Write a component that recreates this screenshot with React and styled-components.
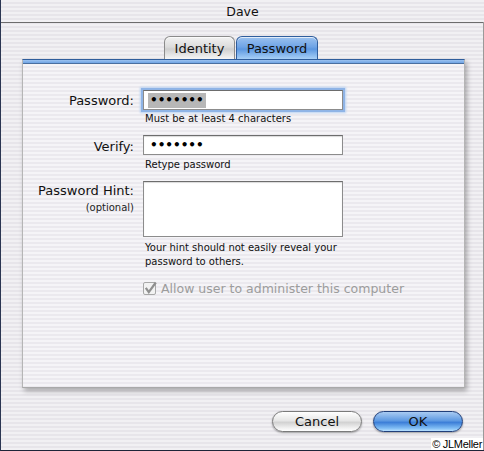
import React from "react";
import styled, { createGlobalStyle } from "styled-components";

const GlobalStyle = createGlobalStyle`
  html, body {
    margin: 0;
    padding: 0;
    background: #fff;
  }
  body {
    font-family: "DejaVu Sans", "Liberation Sans", sans-serif;
  }
`;

const stripes = (a, b) =>
  `repeating-linear-gradient(to bottom, ${a} 0px, ${a} 2px, ${b} 2px, ${b} 4px)`;

const Window = styled.div`
  position: relative;
  width: 483px;
  height: 450px;
  border-left: 1px solid #2b3652;
  border-bottom: 1px solid #1e2538;
  background: ${stripes("#f1f0f3", "#e7e5ea")};
  display: flex;
  flex-direction: column;
  overflow: hidden;
`;

const TitleBar = styled.div`
  height: 21px;
  border-bottom: 1px solid #6c6c6c;
  display: flex;
  align-items: center;
  justify-content: center;
  font-size: 12.5px;
  color: #111;
  padding-top: 1px;
`;

const RightEdge = styled.div`
  position: absolute;
  right: 0;
  top: 22px;
  bottom: 0;
  width: 1px;
  background: #9a9a9a;
`;

const TabRow = styled.div`
  margin-top: 13px;
  height: 23px;
  display: flex;
  padding-left: 163px;
  position: relative;
  z-index: 2;
`;

const Tab = styled.div`
  width: ${(p) => p.$w}px;
  height: 23px;
  box-sizing: border-box;
  display: flex;
  align-items: center;
  justify-content: center;
  font-size: 13px;
  color: #111;
  border-radius: 6px 6px 0 0;
  border: 1px solid ${(p) => (p.$active ? "#2f5d9c" : "#8b8b8b")};
  border-bottom: none;
  margin-right: 1px;
  background: ${(p) =>
    p.$active
      ? "linear-gradient(to bottom, #9cc2ef 0%, #6fa4e6 45%, #5c97e0 55%, #a8d0f7 100%)"
      : "linear-gradient(to bottom, #f2f2f2 0%, #dcdcdc 45%, #cfcfcf 55%, #f6f6f6 100%)"};
  box-shadow: inset 0 1px 0 rgba(255, 255, 255, 0.7);
`;

const Panel = styled.div`
  margin: 0 19px 0 21px;
  height: 329px;
  box-sizing: border-box;
  border-top: 1px solid #2f5d9c;
  border-left: 1px solid #b5b5b5;
  border-right: 1px solid #b5b5b5;
  border-bottom: 1px solid #a9a9a9;
  background: ${stripes("#f5f4f7", "#ebe9ee")};
  box-shadow: 2px 3px 5px rgba(0, 0, 0, 0.3);
  display: flex;
  flex-direction: column;
`;

const PanelBar = styled.div`
  height: 3px;
  background: linear-gradient(to bottom, #9cc3f0, #6fa3e4);
  border-bottom: 1px solid #4a6fa0;
`;

const Form = styled.div`
  display: grid;
  grid-template-columns: 111px 200px;
  column-gap: 9px;
  align-items: start;
  padding-top: 24px;
`;

const Label = styled.div`
  text-align: right;
  font-size: 13px;
  color: #111;
  line-height: 16px;
  padding-top: ${(p) => p.$top || 0}px;
`;

const LabelStack = styled.div`
  padding-top: ${(p) => p.$top || 0}px;
  text-align: right;
`;

const SubLabel = styled.div`
  font-size: 10px;
  color: #222;
  margin-top: 3px;
`;

const Input = styled.div`
  height: ${(p) => p.$h || 20}px;
  box-sizing: border-box;
  background: #fff;
  border: 1px solid #8c8c8c;
  border-top-color: #6d6d6d;
  display: flex;
  align-items: center;
  padding-left: 4px;
  box-shadow: ${(p) =>
    p.$focus ? "0 0 0 2px #8fb4e6, 0 0 2px 3px #b9d2f2" : "inset 0 1px 1px rgba(0,0,0,0.15)"};
  margin-top: ${(p) => p.$mt || 0}px;
`;

const Dots = styled.span`
  font-size: 12px;
  font-weight: bold;
  letter-spacing: 0px;
  line-height: 15px;
  padding: 0 2px;
  background: ${(p) => (p.$selected ? "#b7b7b7" : "transparent")};
  color: #000;
`;

const Help = styled.div`
  font-size: 10px;
  color: #111;
  line-height: 14px;
  margin-top: ${(p) => p.$mt || 0}px;
  padding-left: 2px;
`;

const CheckRow = styled.label`
  display: flex;
  align-items: center;
  gap: 3px;
  font-size: 12.5px;
  color: #9c9c9c;
  margin-top: 12px;
  white-space: nowrap;

  svg {
    flex-shrink: 0;
  }
`;

const ButtonRow = styled.div`
  display: flex;
  justify-content: flex-end;
  gap: 11px;
  padding-right: 21px;
  margin-top: 23px;
`;

const Button = styled.div`
  width: 90px;
  height: 21px;
  box-sizing: border-box;
  border-radius: 11px;
  display: flex;
  align-items: center;
  justify-content: center;
  font-size: 13px;
  color: #111;
  border: 1px solid ${(p) => (p.$primary ? "#213f7a" : "#7a7a7a")};
  background: ${(p) =>
    p.$primary
      ? "linear-gradient(to bottom, #a9cbf2 0%, #5f9ae2 45%, #3d7fd8 55%, #7fbcf4 85%, #b8e0ff 100%)"
      : "linear-gradient(to bottom, #ffffff 0%, #e6e6e6 45%, #d2d2d2 55%, #f2f2f2 85%, #ffffff 100%)"};
  box-shadow: 0 1px 2px rgba(0, 0, 0, 0.35);
`;

const Copyright = styled.div`
  position: absolute;
  right: 1px;
  bottom: 0px;
  font-family: "Liberation Sans", Arial, sans-serif;
  font-size: 11px;
  letter-spacing: -0.3px;
  color: #000;
  background: #fff;
  padding: 0 1px;
  line-height: 12px;
`;

function CheckIcon() {
  return (
    <svg width="15" height="15" viewBox="0 0 15 15">
      <rect x="0.5" y="1.5" width="12" height="12" rx="1.5" fill="#f2f2f2" stroke="#a8a8a8" />
      <path d="M2.8 6.8 L5.8 11.2 L12.8 1.5" fill="none" stroke="#8f8f8f" strokeWidth="2.2" />
    </svg>
  );
}

export default function App() {
  return (
    <>
      <GlobalStyle />
      <Window>
        <TitleBar>Dave</TitleBar>
        <RightEdge />
        <TabRow>
          <Tab $w={71}>Identity</Tab>
          <Tab $active $w={82}>Password</Tab>
        </TabRow>
        <Panel>
          <PanelBar />
          <Form>
            <Label $top={5}>Password:</Label>
            <div>
              <Input $focus $mt={2}>
                <Dots $selected>•••••••</Dots>
              </Input>
              <Help $mt={2}>Must be at least 4 characters</Help>
            </div>

            <Label $top={13}>Verify:</Label>
            <div>
              <Input $mt={9}>
                <Dots>•••••••</Dots>
              </Input>
              <Help $mt={3}>Retype password</Help>
            </div>

            <LabelStack $top={11}>
              <Label>Password Hint:</Label>
              <SubLabel>(optional)</SubLabel>
            </LabelStack>
            <div>
              <Input $h={56} $mt={9} />
              <Help $mt={4}>
                Your hint should not easily reveal your
                <br />
                password to others.
              </Help>
              <CheckRow>
                <CheckIcon />
                Allow user to administer this computer
              </CheckRow>
            </div>
          </Form>
        </Panel>
        <ButtonRow>
          <Button>Cancel</Button>
          <Button $primary>OK</Button>
        </ButtonRow>
        <Copyright>© JLMeller</Copyright>
      </Window>
    </>
  );
}
